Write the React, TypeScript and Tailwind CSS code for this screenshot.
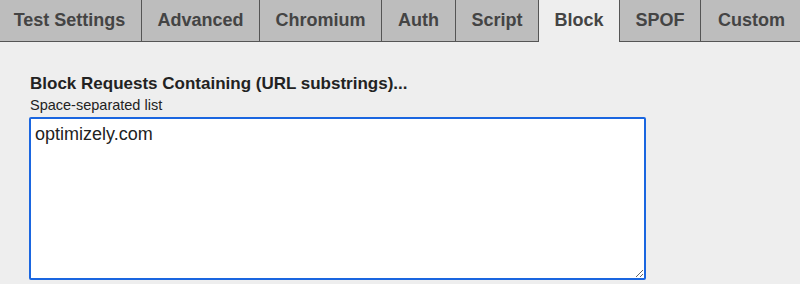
import React from "react";

const tabs: [string, string][] = [
  ["Test Settings", "w-[144px]"],
  ["Advanced", "w-[118px]"],
  ["Chromium", "w-[122px]"],
  ["Auth", "w-[74px]"],
  ["Script", "w-[83px]"],
  ["Block", "w-[81px]"],
  ["SPOF", "w-[81px]"],
  ["Custom", "w-[101px]"],
];

export default function App() {
  return (
    <div className="w-[800px] h-[284px] overflow-hidden bg-[#eeeeee]" style={{ fontFamily: '"Liberation Sans", Arial, sans-serif' }}>
      <div className="flex h-[42px] ml-[-2px]">
        {tabs.map(([t, w]) => {
          const active = t === "Block";
          return (
            <div
              key={t}
              className={
                (active
                  ? "bg-[#eeeeee] border-r border-[#555] "
                  : "bg-[#bdbdbd] border-r border-b border-[#555] last:border-r-0 ") +
                w +
                " shrink-0 h-[42px] flex items-center justify-center pb-[1px] text-[18px] font-bold text-[#444]"
              }
            >
              {t}
            </div>
          );
        })}
      </div>
      <div className="pl-[30px] pt-[32px]">
        <div className="text-[17px] font-bold text-[#222] leading-[20px]">Block Requests Containing (URL substrings)...</div>
        <div className="text-[14.5px] text-[#222] leading-[18px] mt-[2px]">Space-separated list</div>
        <textarea
          defaultValue="optimizely.com"
          className="block mt-[3px] ml-[-1px] w-[617px] h-[163px] bg-white border-2 border-[#1a66e0] rounded-[2px] outline-none px-[4px] py-[4px] text-[18px] text-[#222] leading-[22px]"
          style={{ fontFamily: '"Liberation Sans", Arial, sans-serif' }}
        />
      </div>
    </div>
  );
}
